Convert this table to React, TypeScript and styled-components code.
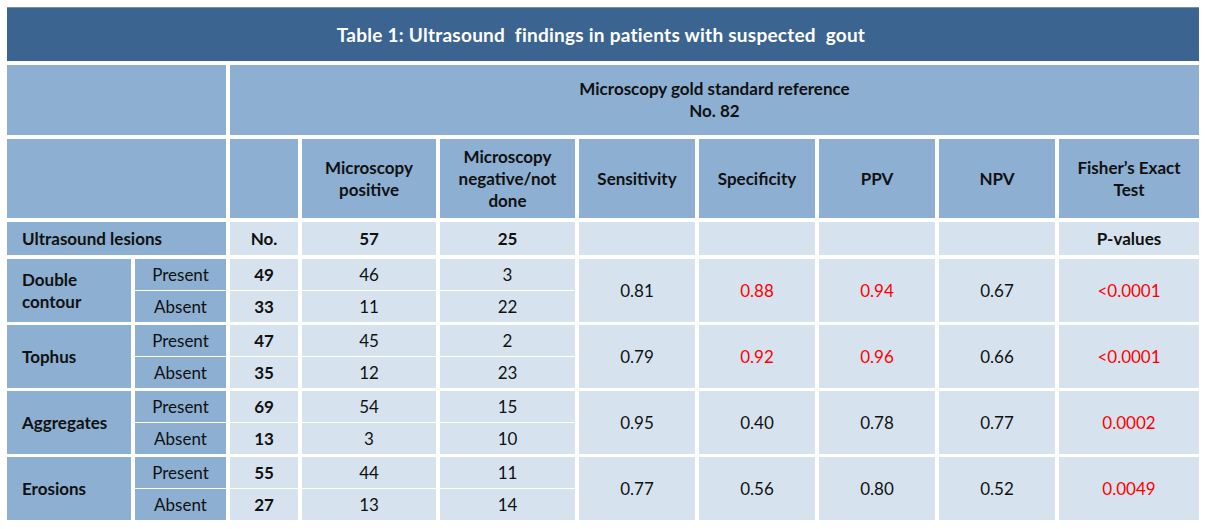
import React from "react";
import styled, { createGlobalStyle } from "styled-components";

const GlobalStyle = createGlobalStyle`
  html, body {
    margin: 0;
    padding: 0;
    background: #ffffff;
  }
  body {
    font-family: Lato, "Open Sans", "Liberation Sans", sans-serif;
    color: #111;
  }
`;

const COLUMNS = "124px 91px 68px 134px 135px 116px 116px 116px 116px 140px";

const tones = {
  dark: "#3b6590",
  mid: "#8cafd2",
  light: "#d6e3ef",
};

const Page = styled.div`
  padding: 7px 6px 9px 7px;
`;

const Table = styled.div`
  width: 1192px;
  display: flex;
  flex-direction: column;
`;

const Title = styled.div`
  height: 54px;
  background: ${tones.dark};
  box-shadow: inset 0 1px 0 #6f90b1;
  color: #ffffff;
  font-weight: 700;
  font-size: 19px;
  letter-spacing: 0.25px;
  white-space: pre;
  display: flex;
  align-items: center;
  justify-content: center;
  padding-right: 4px;
`;

const Section = styled.div<{ $top: number; $rows?: string }>`
  display: grid;
  grid-template-columns: ${COLUMNS};
  grid-template-rows: ${(p) => p.$rows || "auto"};
  column-gap: 4px;
  row-gap: 1px;
  margin-top: ${(p) => p.$top}px;
`;

type CellProps = {
  $tone: "mid" | "light";
  $col?: string;
  $row?: string;
  $left?: boolean;
  $bold?: boolean;
  $red?: boolean;
};

const Cell = styled.div<CellProps>`
  background: ${(p) => tones[p.$tone]};
  grid-column: ${(p) => p.$col || "auto"};
  grid-row: ${(p) => p.$row || "auto"};
  display: flex;
  align-items: center;
  justify-content: ${(p) => (p.$left ? "flex-start" : "center")};
  text-align: ${(p) => (p.$left ? "left" : "center")};
  padding: ${(p) => (p.$left ? "0 0 0 15px" : "0 6px")};
  font-size: 17px;
  line-height: 22px;
  font-weight: ${(p) => (p.$bold ? 700 : 400)};
  color: ${(p) => (p.$red ? "#ff0000" : "#111111")};
`;

type Val = { v: string; red?: boolean };

type Group = {
  name: string;
  present: [string, string, string];
  absent: [string, string, string];
  stats: Val[];
};

const groups: Group[] = [
  {
    name: "Double contour",
    present: ["49", "46", "3"],
    absent: ["33", "11", "22"],
    stats: [{ v: "0.81" }, { v: "0.88", red: true }, { v: "0.94", red: true }, { v: "0.67" }, { v: "<0.0001", red: true }],
  },
  {
    name: "Tophus",
    present: ["47", "45", "2"],
    absent: ["35", "12", "23"],
    stats: [{ v: "0.79" }, { v: "0.92", red: true }, { v: "0.96", red: true }, { v: "0.66" }, { v: "<0.0001", red: true }],
  },
  {
    name: "Aggregates",
    present: ["69", "54", "15"],
    absent: ["13", "3", "10"],
    stats: [{ v: "0.95" }, { v: "0.40" }, { v: "0.78" }, { v: "0.77" }, { v: "0.0002", red: true }],
  },
  {
    name: "Erosions",
    present: ["55", "44", "11"],
    absent: ["27", "13", "14"],
    stats: [{ v: "0.77" }, { v: "0.56" }, { v: "0.80" }, { v: "0.52" }, { v: "0.0049", red: true }],
  },
];

const headers = [
  "Microscopy positive",
  "Microscopy negative/not done",
  "Sensitivity",
  "Specificity",
  "PPV",
  "NPV",
  "Fisher\u2019s Exact Test",
];

const LesionGroup = ({ g, top }: { g: Group; top: number }) => (
  <Section $top={top} $rows="31px 31px">
    <Cell $tone="mid" $col="1" $row="1 / span 2" $left $bold>
      {g.name === "Double contour" ? (
        <span>
          Double
          <br />
          contour
        </span>
      ) : (
        g.name
      )}
    </Cell>
    <Cell $tone="mid" $col="2" $row="1">Present</Cell>
    <Cell $tone="mid" $col="2" $row="2">Absent</Cell>
    {g.present.map((v, i) => (
      <Cell key={"p" + i} $tone="light" $col={String(3 + i)} $row="1" $bold={i === 0}>
        {v}
      </Cell>
    ))}
    {g.absent.map((v, i) => (
      <Cell key={"a" + i} $tone="light" $col={String(3 + i)} $row="2" $bold={i === 0}>
        {v}
      </Cell>
    ))}
    {g.stats.map((s, i) => (
      <Cell key={"s" + i} $tone="light" $col={String(6 + i)} $row="1 / span 2" $red={s.red}>
        {s.v}
      </Cell>
    ))}
  </Section>
);

export default function App() {
  return (
    <Page>
      <GlobalStyle />
      <Table>
        <Title>{"Table 1: Ultrasound  findings in patients with suspected  gout"}</Title>

        <Section $top={4} $rows="70px">
          <Cell $tone="mid" $col="1 / span 2" />
          <Cell $tone="mid" $col="3 / span 8" $bold>
            <span>
              Microscopy gold standard reference
              <br />
              No. 82
            </span>
          </Cell>
        </Section>

        <Section $top={4} $rows="79px">
          <Cell $tone="mid" $col="1 / span 2" />
          <Cell $tone="mid" $col="3" />
          {headers.map((h) => (
            <Cell key={h} $tone="mid" $bold>
              {h}
            </Cell>
          ))}
        </Section>

        <Section $top={4} $rows="33px">
          <Cell $tone="mid" $col="1 / span 2" $left $bold>
            Ultrasound lesions
          </Cell>
          <Cell $tone="light" $bold>No.</Cell>
          <Cell $tone="light" $bold>57</Cell>
          <Cell $tone="light" $bold>25</Cell>
          <Cell $tone="light" />
          <Cell $tone="light" />
          <Cell $tone="light" />
          <Cell $tone="light" />
          <Cell $tone="light" $bold>P-values</Cell>
        </Section>

        {groups.map((g, i) => (
          <LesionGroup key={g.name} g={g} top={i === 0 ? 4 : 3} />
        ))}
      </Table>
    </Page>
  );
}
